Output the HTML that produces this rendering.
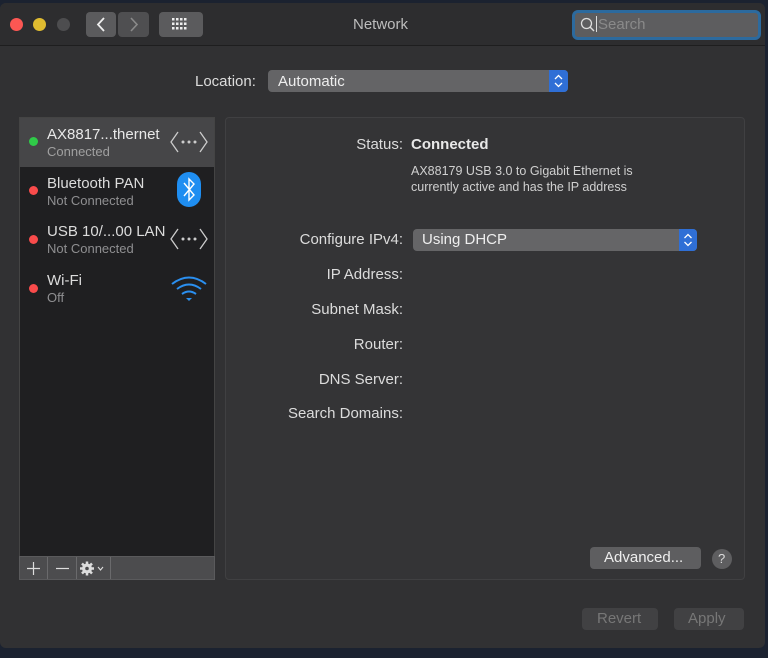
<!DOCTYPE html>
<html><head><style>
*{box-sizing:border-box;margin:0;padding:0}
body{width:768px;height:658px;background:#1b2230;font-family:"Liberation Sans",sans-serif;overflow:hidden;position:relative}
.win{position:absolute;left:0;top:3px;width:765px;height:645px;background:#313133;border-radius:6px;overflow:hidden}
.tb{position:absolute;left:0;top:0;width:100%;height:43px;background:#2d2d2f;border-bottom:1px solid #1e1e1f}
.dot{position:absolute;top:15px;width:13px;height:13px;border-radius:50%}
.btn{position:absolute;background:#5b5b5d;border-radius:4px}
.t{position:absolute;color:#dcdcdc;font-size:15px;white-space:nowrap}
.s{position:absolute;color:#8f8f91;font-size:13px;white-space:nowrap}
.r{text-align:right}
</style></head><body>
<div class="win">
<div class="tb">
<div class="dot" style="left:10px;background:#fc5753"></div>
<div class="dot" style="left:33px;background:#e0bc30"></div>
<div class="dot" style="left:57px;background:#4d4d4f"></div>
<div class="btn" style="left:86px;top:9px;width:30px;height:25px"></div>
<div class="btn" style="left:118px;top:9px;width:31px;height:25px;background:#4f4f51"></div>
<svg style="position:absolute;left:86px;top:9px" width="63" height="25"><path d="M18 6 L12 12.5 L18 19" stroke="#eee" stroke-width="1.8" fill="none"/><path d="M45 6 L51 12.5 L45 19" stroke="#8a8a8a" stroke-width="1.6" fill="none"/></svg>
<div class="btn" style="left:159px;top:9px;width:44px;height:25px"></div>
<svg style="position:absolute;left:172px;top:15px" width="18" height="13"><g fill="#eee"><rect x="0" y="0" width="2.5" height="2.5"/><rect x="4" y="0" width="2.5" height="2.5"/><rect x="8" y="0" width="2.5" height="2.5"/><rect x="12" y="0" width="2.5" height="2.5"/><rect x="0" y="4.5" width="2.5" height="2.5"/><rect x="4" y="4.5" width="2.5" height="2.5"/><rect x="8" y="4.5" width="2.5" height="2.5"/><rect x="12" y="4.5" width="2.5" height="2.5"/><rect x="0" y="9" width="2.5" height="2.5"/><rect x="4" y="9" width="2.5" height="2.5"/><rect x="8" y="9" width="2.5" height="2.5"/><rect x="12" y="9" width="2.5" height="2.5"/></g></svg>
<div class="t" style="left:353px;top:13px;color:#bdbdbd">Network</div>
<div style="position:absolute;left:572px;top:7px;width:189px;height:30px;border:3px solid #2c6a9e;border-radius:6px;background:#5d5d5f"></div>
<svg style="position:absolute;left:580px;top:14px" width="16" height="16"><circle cx="6.5" cy="6.5" r="5" stroke="#ddd" stroke-width="1.3" fill="none"/><path d="M10 10 L14 14" stroke="#ddd" stroke-width="1.4"/></svg>
<div style="position:absolute;left:596px;top:13px;width:1px;height:16px;background:#ddd"></div>
<div class="t" style="left:598px;top:13px;color:#8a8a8a">Search</div>
</div>
<div class="t" style="left:195px;top:70px">Location:</div>
<div style="position:absolute;left:268px;top:67px;width:300px;height:22px;background:#646466;border-radius:4px"></div>
<div class="t" style="left:278px;top:70px;color:#eee">Automatic</div>
<div style="position:absolute;left:549px;top:67px;width:19px;height:22px;background:#2f6fd6;border-radius:0 4px 4px 0"></div>
<svg style="position:absolute;left:549px;top:67px" width="19" height="22"><path d="M6 9 L9.5 5.5 L13 9 M6 13 L9.5 16.5 L13 13" stroke="#fff" stroke-width="1.3" fill="none"/></svg>

<div style="position:absolute;left:19px;top:114px;width:196px;height:463px;background:#1f1f21;border:1px solid #444"></div>
<div style="position:absolute;left:20px;top:115px;width:194px;height:49px;background:#464648"></div>
<div class="dot" style="left:29px;top:134px;width:9px;height:9px;background:#2fcb48"></div>
<div class="t" style="left:47px;top:123px;color:#e8e8e8">AX8817...thernet</div>
<div class="s" style="left:47px;top:141px;color:#a0a0a0">Connected</div>
<div class="dot" style="left:29px;top:183px;width:9px;height:9px;background:#f94b4b"></div>
<div class="t" style="left:47px;top:172px">Bluetooth PAN</div>
<div class="s" style="left:47px;top:190px">Not Connected</div>
<div class="dot" style="left:29px;top:232px;width:9px;height:9px;background:#f94b4b"></div>
<div class="t" style="left:47px;top:220px">USB 10/...00 LAN</div>
<div class="s" style="left:47px;top:238px">Not Connected</div>
<div class="dot" style="left:29px;top:281px;width:9px;height:9px;background:#f94b4b"></div>
<div class="t" style="left:47px;top:269px">Wi-Fi</div>
<div class="s" style="left:47px;top:287px">Off</div>
<svg style="position:absolute;left:170px;top:128px" width="38" height="22"><path d="M8 1 L1 11 L8 21 M30 1 L37 11 L30 21" stroke="#ccc" stroke-width="1.3" fill="none"/><circle cx="13" cy="11" r="1.5" fill="#ccc"/><circle cx="19" cy="11" r="1.5" fill="#ccc"/><circle cx="25" cy="11" r="1.5" fill="#ccc"/></svg>
<svg style="position:absolute;left:170px;top:225px" width="38" height="22"><path d="M8 1 L1 11 L8 21 M30 1 L37 11 L30 21" stroke="#ccc" stroke-width="1.3" fill="none"/><circle cx="13" cy="11" r="1.5" fill="#ccc"/><circle cx="19" cy="11" r="1.5" fill="#ccc"/><circle cx="25" cy="11" r="1.5" fill="#ccc"/></svg>
<svg style="position:absolute;left:177px;top:169px" width="25" height="36"><rect x="0" y="0" width="24" height="35" rx="12" fill="#1f8ef1"/><path d="M7 11 L17 23 L12 28 L12 7 L17 12 L7 24" stroke="#fff" stroke-width="1.4" fill="none"/></svg>
<svg style="position:absolute;left:170px;top:272px" width="38" height="28"><g stroke="#2a8ff0" stroke-width="2" fill="none"><path d="M2 9 Q19 -4 36 9"/><path d="M7 14 Q19 5 31 14"/><path d="M12 19 Q19 14 26 19"/></g><path d="M16 23 L19 26 L22 23 Z" fill="#2a8ff0"/></svg>
<div style="position:absolute;left:19px;top:553px;width:196px;height:24px;background:#4c4c4e;border:1px solid #5a5a5c"></div>
<div style="position:absolute;left:47px;top:554px;width:1px;height:22px;background:#6a6a6c"></div>
<div style="position:absolute;left:76px;top:554px;width:1px;height:22px;background:#6a6a6c"></div>
<div style="position:absolute;left:110px;top:554px;width:1px;height:22px;background:#6a6a6c"></div>
<svg style="position:absolute;left:26px;top:558px" width="15" height="15"><path d="M7.5 1 V14 M1 7.5 H14" stroke="#ddd" stroke-width="1.2"/></svg>
<svg style="position:absolute;left:55px;top:558px" width="15" height="15"><path d="M1 7.5 H14" stroke="#ddd" stroke-width="1.2"/></svg>
<svg style="position:absolute;left:79px;top:557px" width="30" height="17"><circle cx="8" cy="8.5" r="5" fill="#ddd"/><g stroke="#ddd" stroke-width="2.5"><path d="M8 1.5 V15.5 M1 8.5 H15 M3 3.5 L13 13.5 M13 3.5 L3 13.5"/></g><circle cx="8" cy="8.5" r="1.8" fill="#4c4c4e"/><path d="M19 7 L21.5 10 L24 7" stroke="#ddd" stroke-width="1.1" fill="none"/></svg>

<div style="position:absolute;left:225px;top:114px;width:520px;height:463px;background:#343436;border:1px solid #404042;border-radius:4px"></div>
<div class="t r" style="right:362px;top:133px">Status:</div>
<div class="t" style="left:411px;top:133px;font-weight:bold;color:#e8e8e8">Connected</div>
<div class="t" style="left:411px;top:160px;font-size:12.5px;line-height:16px;color:#d0d0d0">AX88179 USB 3.0 to Gigabit Ethernet is<br>currently active and has the IP address</div>
<div class="t r" style="right:362px;top:228px">Configure IPv4:</div>
<div style="position:absolute;left:413px;top:226px;width:284px;height:22px;background:#656567;border-radius:4px"></div>
<div class="t" style="left:422px;top:228px;color:#eee">Using DHCP</div>
<div style="position:absolute;left:679px;top:226px;width:18px;height:22px;background:#2f6fd6;border-radius:0 4px 4px 0"></div>
<svg style="position:absolute;left:679px;top:226px" width="18" height="22"><path d="M5.5 9 L9 5.5 L12.5 9 M5.5 13 L9 16.5 L12.5 13" stroke="#fff" stroke-width="1.3" fill="none"/></svg>
<div class="t r" style="right:362px;top:263px">IP Address:</div>
<div class="t r" style="right:362px;top:298px">Subnet Mask:</div>
<div class="t r" style="right:362px;top:333px">Router:</div>
<div class="t r" style="right:362px;top:368px">DNS Server:</div>
<div class="t r" style="right:362px;top:402px">Search Domains:</div>
<div style="position:absolute;left:590px;top:544px;width:111px;height:22px;background:#5e5e60;border-radius:4px"></div>
<div class="t" style="left:604px;top:546px;color:#eee">Advanced...</div>
<div style="position:absolute;left:712px;top:546px;width:20px;height:20px;background:#5e5e60;border-radius:50%"></div>
<div class="t" style="left:718px;top:548px;font-size:13px;color:#ddd">?</div>
<div style="position:absolute;left:582px;top:605px;width:76px;height:22px;background:#414143;border-radius:4px"></div>
<div class="t" style="left:597px;top:607px;color:#777">Revert</div>
<div style="position:absolute;left:674px;top:605px;width:70px;height:22px;background:#414143;border-radius:4px"></div>
<div class="t" style="left:688px;top:607px;color:#777">Apply</div>
</div>
</body></html>
